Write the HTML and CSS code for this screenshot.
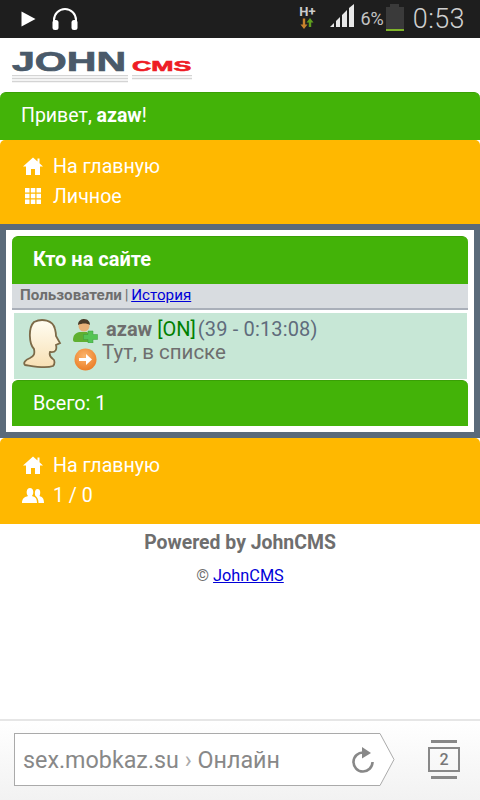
FILE: index.html
```html
<!DOCTYPE html>
<html lang="ru">
<head>
<meta charset="utf-8">
<title>Онлайн</title>
<link rel="stylesheet" href="styles.css">
</head>
<body>
<div class="screen">
  <header class="status">
    <svg class="st-play" width="15" height="16" viewBox="0 0 15 16"><path d="M0.500 0.500 L14.500 8 L0.500 15.500 Z" fill="#fff"/></svg>
    <svg class="st-phones" width="28" height="24" viewBox="0 0 28 24"><path d="M3 15 V13 A11 11 0 0 1 25 13 V15" fill="none" stroke="#fff" stroke-width="2"/><rect x="1.5" y="13" width="6" height="10" rx="2.5" fill="#fff"/><rect x="20.500" y="13" width="6" height="10" rx="2.500" fill="#fff"/></svg>
    <span class="st-spacer"></span>
    <div class="st-net">
      <span class="st-h">H+</span>
      <svg width="14" height="11" viewBox="0 0 14 11"><path d="M4 11 L0.500 6.500 H2.800 V0.500 H5.200 V6.500 H7.500 Z" fill="#c8822c"/><path d="M10 0 L13.500 4.500 H11.200 V9 H8.800 V4.500 H6.500 Z" fill="#5f9f1f"/></svg>
    </div>
    <svg class="st-signal" width="25" height="24" viewBox="0 0 25 24"><path d="M0 23 L4 19 V23 Z M6 17 L10 13 V23 H6 Z M12 11 L17 6 V23 H12 Z M19 4 L24 0 V23 H19 Z" fill="#e8e8e8"/></svg>
    <span class="st-pct">6%</span>
    <div class="st-battery"><span class="st-cap"></span><span class="st-cell"></span></div>
    <span class="st-time">0:53</span>
  </header>

  <main class="page">
    <div class="logo">
      <div class="logo-row"><span class="logo-john">JOHN</span><span class="logo-cms">CMS</span></div>
      <div class="logo-shine"><span class="shine-a"></span><span class="shine-b"></span></div>
    </div>

    <div class="phdr hello">Привет, <b>azaw</b>!</div>

    <nav class="menu">
      <div class="menu-row">
        <svg class="ico" width="20" height="18" viewBox="0 0 20 18"><path d="M10 0.500 L14.500 4.500 V1.500 H16.500 V6.300 L20 9.500 H17 V18 H12 V12 H8 V18 H3 V9.500 H0 Z" fill="#fff"/></svg>
        <span>На главную</span>
      </div>
      <div class="menu-row">
        <svg class="ico" width="20" height="18" viewBox="0 0 20 18"><path d="M2 1h4.500v4.500H2zM7.800 1h4.500v4.500H7.800zM13.500 1H18v4.500h-4.500zM2 6.800h4.500v4.500H2zM7.800 6.800h4.500v4.500H7.800zM13.500 6.800H18v4.500h-4.500zM2 12.500h4.500V17H2zM7.800 12.500h4.500V17H7.800zM13.500 12.500H18V17h-4.500z" fill="#fff"/></svg>
        <span>Личное</span>
      </div>
    </nav>

    <section class="frame">
      <div class="frame-in">
        <div class="phdr title"><b>Кто на сайте</b></div>
        <div class="tabs"><b>Пользователи</b> | <a href="#">История</a></div>
        <div class="user">
          <svg class="avatar" width="44" height="50" viewBox="0 0 44 50"><defs><linearGradient id="skin" x1="0" y1="0" x2="0" y2="1"><stop offset="0" stop-color="#fffdf2"/><stop offset="1" stop-color="#f8e0b4"/></linearGradient></defs><path d="M12 3 C20 -1 31 1 33 10 C34 14 34 16 34 17 L38 24 L34 26 C35 30 34 34 28 33 C27 36 28 38 31 40 C33 41 33 45 31 47 C23 50 10 47 3 46 C1 44 3 41 8 39 C12 37 13 35 12 30 C7 25 6 9 12 3 Z" fill="url(#skin)" stroke="#7d6a48" stroke-width="1.800"/></svg>
          <div class="user-text">
            <div class="user-line1">
              <svg class="ic-add" width="26" height="24" viewBox="0 0 26 24"><path d="M0 21 C0 14 5 13 8 13 H14 L17 16 V23 H2 C1 23 0 22 0 21Z" fill="#5fb030"/><circle cx="11" cy="7" r="5.500" fill="#e8b078"/><path d="M5 6 C5 1 9 0 11 0 C15 0 17 3 17 6 C14 4 9 4 5 6Z" fill="#4a3a28"/><path d="M15 12h5v3.500h4.500v5H20V24h-5v-3.500h-4.500v-5H15Z" fill="#55c455" stroke="#3f9a3f" stroke-width=".5"/></svg>
              <span><b class="name">azaw</b> <span class="on">[ON]</span> <span class="stamp">(39 - 0:13:08)</span></span>
            </div>
            <div class="user-line2">
              <svg class="ic-go" width="23" height="23" viewBox="0 0 23 23"><defs><radialGradient id="go" cx=".45" cy=".35" r=".7"><stop offset="0" stop-color="#fbb56d"/><stop offset="1" stop-color="#ea7a22"/></radialGradient></defs><circle cx="11.500" cy="11.500" r="11" fill="url(#go)"/><path d="M5 10h7V6l6 5.500-6 5.500v-4H5Z" fill="#fff"/></svg>
              <span class="where">Тут, в списке</span>
            </div>
          </div>
        </div>
        <div class="phdr total">Всего: 1</div>
      </div>
    </section>

    <nav class="menu menu-b">
      <div class="menu-row">
        <svg class="ico" width="20" height="18" viewBox="0 0 20 18"><path d="M10 0.500 L14.500 4.500 V1.500 H16.500 V6.300 L20 9.500 H17 V18 H12 V12 H8 V18 H3 V9.500 H0 Z" fill="#fff"/></svg>
        <span>На главную</span>
      </div>
      <div class="menu-row">
        <svg class="ico ico-users" width="22" height="16" viewBox="0 0 22 16"><path d="M0 16 C0 11 3 10 6 9 C4 7 4 1 8 1 C12 1 12 7 10 9 C13 10 15 11 15 16Z" fill="#fff"/><path d="M16.500 16 C16.500 12 15 10 13.500 9 C12.500 7 12.500 2 15.500 2 C19 2 18.500 7 17.500 9 C20 10 22 11 22 16Z" fill="#fff"/></svg>
        <span>1 / 0</span>
      </div>
    </nav>

    <footer class="foot">
      <div class="powered">Powered by JohnCMS</div>
      <div class="copy">© <a href="#">JohnCMS</a></div>
    </footer>
  </main>

  <div class="browser">
    <div class="url">
      <div class="url-box">
        <span class="url-text">sex.mobkaz.su <i>›</i> Онлайн</span>
        <svg class="reload" width="24" height="26" viewBox="0 0 24 26"><path d="M12.500 5.500 A9.500 9.500 0 1 0 21.500 15" fill="none" stroke="#888" stroke-width="2.600"/><path d="M11 0 L20 6 L11 11.500 Z" fill="#888"/></svg>
      </div>
      <svg class="url-tip" width="15" height="53" viewBox="0 0 15 53"><path d="M0 .5 L14 26.500 L0 52.500" fill="#fff" stroke="#aaa" stroke-width="1"/></svg>
    </div>
    <div class="tabs-btn">
      <span class="tab-line"></span>
      <span class="tab-num">2</span>
      <span class="tab-line"></span>
    </div>
  </div>
</div>
</body>
</html>
```
FILE: styles.css
```css
* { box-sizing: border-box; }
html, body { margin: 0; padding: 0; }
body { font-family: Roboto, "Liberation Sans", sans-serif; background: #fff; }
.screen { width: 480px; height: 800px; display: flex; flex-direction: column; overflow: hidden; }

/* status bar */
.status { height: 38px; flex: none; background: #1e1e1e; display: flex; align-items: center; padding: 0 15px 0 21px; color: #ccc; }
.st-play { flex: none; margin-top: -1px; }
.st-phones { flex: none; margin-left: 15px; margin-top: -1px; }
.st-spacer { flex: 1; }
.st-net { display: flex; flex-direction: column; align-items: center; width: 20px; margin-top: -3px; }
.st-h { font-size: 13px; line-height: 12px; font-weight: 700; color: #ccc; }
.st-signal { margin-left: 13px; margin-top: -6px; flex: none; }
.st-pct { font-size: 18px; margin-left: 5px; color: #c4c4c4; margin-top: -1px; }
.st-battery { width: 18px; height: 27px; margin-left: 2px; margin-top: -3px; display: flex; flex-direction: column; align-items: center; }
.st-cap { width: 9px; height: 3px; background: #3a3a3a; }
.st-cell { width: 18px; flex: 1; background: #3a3a3a; border-bottom: 2px solid #7fb32a; }
.st-time { font-size: 27px; font-weight: 300; margin-left: 9px; color: #d0d0d0; margin-top: -1px; letter-spacing: .4px; }

/* page */
.page { flex: 1; min-height: 0; }
.logo { height: 54px; padding: 14px 0 0 12px; overflow: hidden; }
.logo-row { display: flex; align-items: flex-end; height: 20px; }
.logo-john { font: 700 27px/20px "Liberation Sans", sans-serif; color: #4a5a6a; -webkit-text-stroke: .7px #4a5a6a; width: 120px; display: inline-block; transform-origin: 0 50%; transform: scaleX(1.52); }
.logo-cms { font: 700 15px/12px "Liberation Sans", sans-serif; color: #ee1c25; -webkit-text-stroke: .6px #ee1c25; width: 60px; display: inline-block; transform-origin: 0 100%; transform: scaleX(1.78); }
.logo-shine { display: flex; gap: 4px; margin-top: 3px; height: 8px; }
.shine-a, .shine-b { display: block; background: repeating-linear-gradient(to bottom, #d4d4d4 0 1px, #f4f4f4 1px 3px); }
.shine-a { width: 116px; }
.shine-b { width: 60px; height: 5px; }

.phdr { background: #43b308; color: #fff; border-radius: 6px 6px 0 0; border-top: 1px solid #3aa006; }
.hello { height: 48px; font-size: 19.500px; line-height: 45px; padding-left: 21px; }
.menu { background: #ffb800; height: 84px; padding: 11px 0 0 23px; border-radius: 5px 5px 0 0; color: #fff; font-size: 19.600px; }
.menu-b { height: 86px; padding-top: 12px; }
.menu-row { display: flex; align-items: center; height: 30px; }
.ico { flex: none; margin-right: 10px; }
.ico-users { margin-left: -1px; margin-right: 9px; }

.frame { background: #5a6a7a; height: 214px; padding: 6px; }
.frame-in { background: #fff; height: 202px; padding: 6px; }
.title { height: 48px; font-size: 20px; line-height: 44px; padding-left: 21px; }
.tabs { height: 26px; background: #d8dce0; border-bottom: 2px solid #a9afb9; font-size: 15.200px; line-height: 22px; padding-left: 8px; color: #6e6e6e; word-spacing: -1px; }
.tabs a, .copy a { color: #0000d8; }
.user { margin: 3px 1px 1px 2px; height: 66px; background: #c7e7d6; display: flex; padding: 5px 0 0 8px; }
.avatar { flex: none; margin-top: 1px; }
.user-text { margin-left: 7px; color: #6e6e6e; font-size: 20px; }
.user-line1 { display: flex; align-items: center; height: 24px; margin-top: -1px; white-space: pre; }
.ic-add { flex: none; margin: 4px 7px 0 0; }
.name { color: #6e6e6e; }
.on { color: #008000; }
.stamp { color: #5f6c7c; letter-spacing: .15px; margin-left: -3px; }
.user-line2 { display: flex; align-items: flex-start; height: 30px; margin-top: 1px; }
.ic-go { flex: none; margin: 6px 5px 0 1px; }
.where { line-height: 20px; margin-left: 0; color: #6e6e6e; font-size: 20.500px; }
.total { height: 46px; font-size: 19.800px; line-height: 45px; padding-left: 21px; }

.foot { text-align: center; color: #6e6e6e; }
.powered { font-size: 19.400px; font-weight: 700; line-height: 24px; margin-top: 7px; }
.copy { font-size: 16.300px; line-height: 20px; margin-top: 11px; }

/* browser bar */
.browser { height: 81px; flex: none; border-top: 2px solid #e6e6e6; background: linear-gradient(to bottom, #fff, #f2f2f2); display: flex; align-items: flex-start; padding: 12px 0 0 14px; }
.url { display: flex; height: 53px; }
.url-box { width: 366px; height: 53px; background: #fff; border: 1px solid #aaa; border-right: 0; display: flex; align-items: center; justify-content: space-between; padding: 0 5px 0 8px; }
.url-text { font-size: 23.300px; color: #888; white-space: pre; }
.url-text i { font-style: normal; color: #aaa; }
.reload { flex: none; }
.url-tip { flex: none; display: block; }
.tabs-btn { width: 32px; margin: 7px 0 0 33px; display: flex; flex-direction: column; align-items: center; gap: 4px; }
.tab-line { display: block; width: 26px; height: 3px; background: #888; }
.tab-num { display: block; width: 32px; height: 25px; border: 2px solid #888; text-align: center; font-size: 16px; font-weight: 500; line-height: 21px; color: #777; }
```
